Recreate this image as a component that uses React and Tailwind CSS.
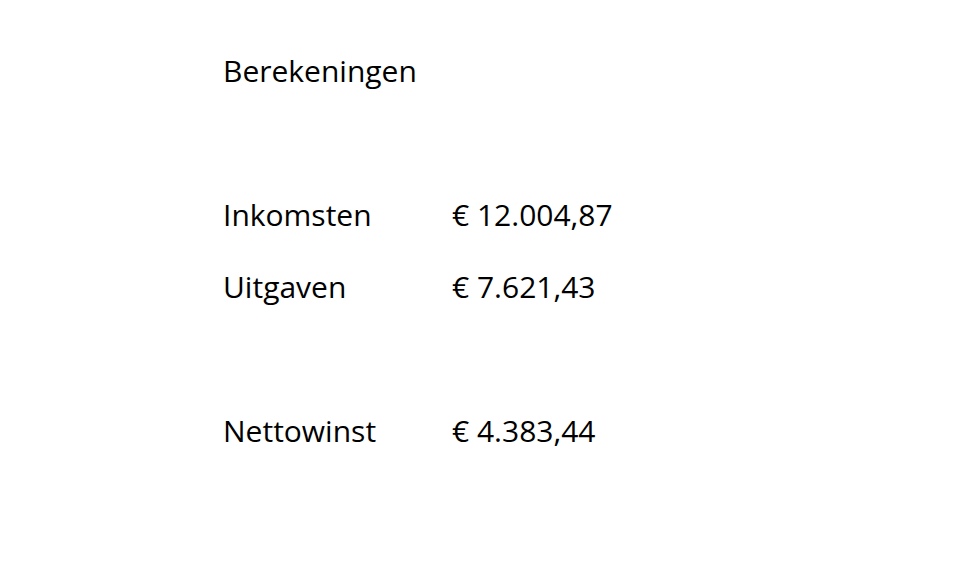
export default function App() {
  const rows = [
    { label: "Inkomsten", value: "€ 12.004,87" },
    { label: "Uitgaven", value: "€ 7.621,43" },
  ];

  return (
    <div className="w-[954px] h-[564px] bg-white text-black font-['Open_Sans',sans-serif] text-[30px] leading-[72px] pl-[223px] pt-[35px]">
      <div>Berekeningen</div>
      <div className="h-[72px]" />
      {rows.map((r) => (
        <div key={r.label} className="grid grid-cols-[229px_auto]">
          <span>{r.label}</span>
          <span>{r.value}</span>
        </div>
      ))}
      <div className="h-[72px]" />
      <div className="grid grid-cols-[229px_auto]">
        <span>Nettowinst</span>
        <span>€ 4.383,44</span>
      </div>
    </div>
  );
}
